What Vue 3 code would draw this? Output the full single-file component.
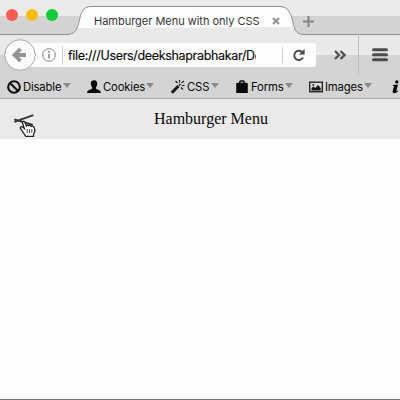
<script setup>
const tools = [
  { icon: 'ban', label: 'Disable', text: 40, width: 80 },
  { icon: 'person', label: 'Cookies', text: 43, width: 84 },
  { icon: 'wand', label: 'CSS', text: 24, width: 64 },
  { icon: 'bag', label: 'Forms', text: 34, width: 74 },
  { icon: 'image', label: 'Images', text: 39, width: 83 },
  { icon: 'info', label: '', text: 0, width: 18 },
]
</script>

<template>
  <div class="window">
    <header class="tabs">
      <svg class="tab-shape" width="400" height="36" viewBox="0 0 400 36">
        <path d="M0 34.5H66C75 34.5 77 30 79 22C81 12 83 6.5 91 6.5H280C288 6.5 291 13 293 23C295 31 297 34.5 304 34.5H400V36H0Z" fill="#e9e9e9" />
        <path d="M77 28C80 18 81 6.5 91 6.5H280C289 6.5 291 16 294 27Z" fill="#fdfdfd" />
        <path d="M0 34.5H66C75 34.5 77 30 79 22C81 12 83 6.5 91 6.5H280C288 6.5 291 13 293 23C295 31 297 34.5 304 34.5H400" fill="none" stroke="#909090" />
      </svg>
      <div class="lights"><i class="red"></i><i class="yellow"></i><i class="green"></i></div>
      <span class="tab-title">Hamburger Menu with only CSS</span>
      <svg class="close" width="8" height="8" viewBox="0 0 8 8"><path d="M1 1L7 7M7 1L1 7" stroke="#929292" stroke-width="2" /></svg>
      <svg class="plus" width="11" height="11" viewBox="0 0 11 11"><path d="M5.5 0V11M0 5.5H11" stroke="#858585" stroke-width="2" /></svg>
    </header>

    <div class="navbar">
      <svg class="back" width="32" height="32" viewBox="0 0 32 32">
        <circle cx="16" cy="16" r="15.3" fill="#fafafa" stroke="#a8a8a8" />
        <path d="M16.5 10L10.5 16L16.5 22M11 16H22" fill="none" stroke="#949494" stroke-width="3.8" />
      </svg>
      <div class="address">
        <svg class="about" width="14" height="14" viewBox="0 0 14 14">
          <circle cx="7" cy="7" r="6.3" fill="none" stroke="#858585" />
          <path d="M7 6V10.5M7 3V4.7" stroke="#808080" stroke-width="1.5" />
        </svg>
        <i class="rule"></i>
        <span class="url">file:///Users/deekshaprabhakar/De</span>
        <i class="rule second"></i>
        <svg class="reload" width="12" height="12" viewBox="0 0 12 12">
          <path d="M8.8 2.9A4.6 4.6 0 1 0 10 8.4" fill="none" stroke="#4c4c4c" stroke-width="2" />
          <path d="M11.6 -.3V5.4H5.9Z" fill="#4c4c4c" />
        </svg>
      </div>
      <svg class="more" width="12" height="10" viewBox="0 0 12 10"><path d="M1 1L5 5L1 9M6.5 1L10.5 5L6.5 9" fill="none" stroke="#505050" stroke-width="2.3" /></svg>
      <i class="divider"></i>
      <svg class="burger" width="16" height="14" viewBox="0 0 16 14"><path d="M1.5 1.8H14.5M1.5 6.8H14.5M1.5 11.8H14.5" stroke="#4b4b4b" stroke-width="3" stroke-linecap="round" /></svg>
    </div>

    <nav class="tools">
      <div v-for="t in tools" :key="t.icon" class="tool" :style="{ width: t.width + 'px' }">
        <svg class="icon" width="14" height="14" viewBox="0 0 14 14">
          <g v-if="t.icon === 'ban'" fill="none" stroke="#111" stroke-width="2.1"><circle cx="7" cy="7" r="5.8" /><path d="M3 3L11 11" /></g>
          <path v-else-if="t.icon === 'person'" fill="#080808" d="M3.8 3.5C4 1.2 5 .2 7.2 .2S10.5 1.8 10.2 4.5C10 6.2 8.9 7 8.9 8.5C9.2 9.5 13.8 9.6 14 13H0C.2 9.6 4.8 9.5 5.3 8.5C5.4 7 4 6 3.8 3.5Z" />
          <g v-else-if="t.icon === 'wand'" stroke="#181818"><path d="M.8 12.8L7.5 6" stroke-width="3" /><path d="M8 5.5L9.5 4" stroke-width="1.5" /><path d="M8.5 0V2.5M4.5 1L6.5 3M10.5 3L13 .8M10.8 5.5H13.5M10 7.5L12 9.5" stroke-width="1.1" /></g>
          <g v-else-if="t.icon === 'bag'"><path d="M1.2 3H12.8V13H1.2Z" fill="#090909" /><path d="M4 3L5.5 1H8.5L10 3" fill="#888" stroke="#181818" stroke-width="1.5" /></g>
          <g v-else-if="t.icon === 'image'"><rect x=".7" y="2.2" width="12.6" height="9.5" fill="#ddd" stroke="#252525" stroke-width="1.4" /><path d="M2.5 10.5V8L4.5 6.5L6.2 8L9 5L11.7 8V10.5Z" fill="#111" /><circle cx="4.3" cy="5" r="1" fill="#222" /></g>
          <g v-else fill="#090909"><circle cx="4.8" cy="1.9" r="1.7" /><path d="M1 5L6 4.4L4.2 11.2L6 10.2L6 11.2Q4 13.4 1.8 13.2Q0 13 .8 10.6L2 6H.8Z" /></g>
        </svg>
        <span v-if="t.label" class="label" :style="{ width: t.text + 'px' }">{{ t.label }}</span>
        <i v-if="t.label" class="arrow"></i>
      </div>
    </nav>

    <main class="page">
      <div class="page-header">
        <svg class="menu" width="22" height="38" viewBox="0 0 22 38">
          <path d="M.3 20.8L19.3 14.2M.3 18.3L18.8 24" fill="none" stroke="#343434" stroke-width="1.9" />
          <path transform="translate(0 -1.2)" d="M10.8 35.2Q10 33.3 8.5 31.5L6.2 28.2Q6.4 26.2 8.6 27.3L10.3 28.8L8.5 22.8Q8.7 21 10.6 21.8L12.4 26.1Q13.2 24.6 14.7 25.9Q16.2 24.9 17.3 26.5Q19.3 25.7 20.2 27.9L20.9 30.5Q20.7 33 19.5 34.7V36.5H11.8Z" fill="#fff" stroke="#222" stroke-width="1.3" />
          <path d="M13.2 28.1V32.1M15.5 28.1V32.1M17.8 28.1V32.1" stroke="#333" stroke-width=".9" />
        </svg>
        <h1>Hamburger Menu</h1>
      </div>
    </main>
  </div>
</template>

<style>
body { margin: 0; overflow: hidden; }
</style>

<style scoped>
.window { width: 400px; height: 400px; box-sizing: border-box; border-bottom: 1px solid #757575; display: flex; flex-direction: column; overflow: hidden; background: #fefefe; font-family: Inter, "Liberation Sans", sans-serif; }
svg, i { display: block; flex: none; }
.tabs { position: relative; height: 35px; flex: none; display: flex; align-items: flex-start; background: linear-gradient(#ebebeb 16px, #d3d3d3 16px); }
.tab-shape { position: absolute; left: 0; top: 0; }
.lights { position: relative; display: flex; gap: 8px; padding: 9px 0 0 6px; width: 88px; }
.lights i { width: 12px; height: 12px; border-radius: 50%; }
.red { background: #ff5b51; }
.yellow { background: #fdbc09; }
.green { background: #14ce38; }
.tab-title { position: relative; width: 167px; padding-top: 14px; font-size: 11px; line-height: 15px; white-space: nowrap; color: #353535; letter-spacing: -.02px; }
.close { position: relative; margin: 17px 0 0 11px; }
.plus { position: relative; margin: 16px 0 0 23px; }
.navbar { height: 40px; flex: none; display: flex; align-items: center; background: linear-gradient(#e9e9e9 20px, #d4d4d4 20px); }
.back { position: relative; margin-left: 4px; z-index: 1; }
.address { height: 24px; width: 296px; box-sizing: border-box; margin-left: -16px; padding-left: 22px; display: flex; align-items: center; border-radius: 0 3px 3px 0; background: #fdfdfd; }
.rule { width: 1px; height: 19px; background: #cfcfcf; margin-left: 6px; }
.rule.second { margin-left: 26px; height: 16px; }
.url { width: 188px; margin-left: 5px; padding-top: 1px; overflow: hidden; white-space: nowrap; font-size: 12.5px; line-height: 18px; color: #080808; -webkit-text-stroke: .15px #080808; letter-spacing: -.33px; }
.reload { margin-left: 10px; overflow: visible; }
.more { margin-left: 18px; }
.divider { width: 1px; height: 39px; margin-left: 12px; background: #bdbdbd; }
.burger { margin-left: 13px; }
.tools { height: 24px; flex: none; box-sizing: border-box; padding-left: 7px; border-bottom: 1px solid #aaa; display: flex; align-items: center; background: #d4d4d4; overflow: hidden; }
.tool { flex: none; display: flex; align-items: center; }
.label { margin-left: 2px; padding-top: 1px; font-size: 11.3px; line-height: 16px; white-space: nowrap; color: #080808; letter-spacing: -.16px; }
.arrow { border: 4px solid transparent; border-top: 5px solid #898989; border-bottom: 0; margin-top: -2px; }
.page { flex: 1; background: #fefefe; }
.page-header { height: 40px; box-sizing: border-box; display: flex; align-items: center; padding-left: 14px; background: #eaeaea; }
.menu { margin-top: 2px; }
h1 { margin: -1px 0 0 118px; font: 400 16px/20px "Liberation Serif", serif; color: #080808; }
</style>
